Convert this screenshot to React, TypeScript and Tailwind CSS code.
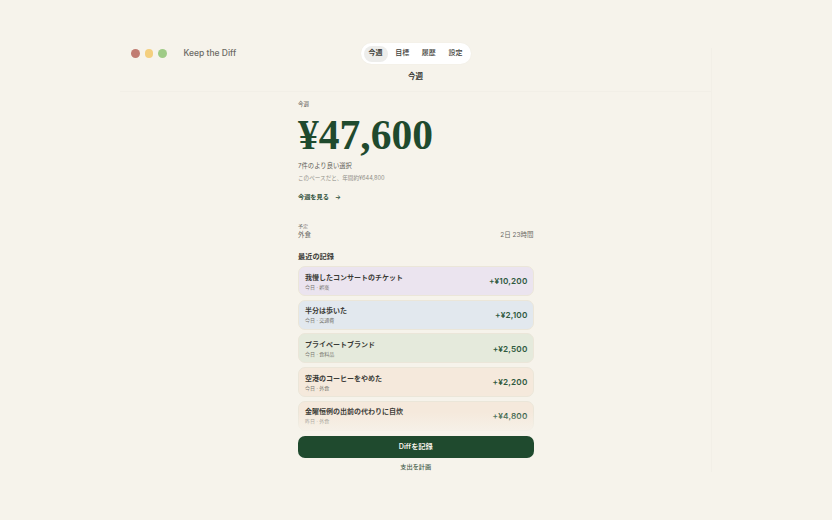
import React from 'react';

interface Entry {
  title: string;
  meta: string;
  amount: string;
  tone: string;
}

const entries: Entry[] = [
  { title: '我慢したコンサートのチケット', meta: '今日 · 娯楽', amount: '+¥10,200', tone: 'bg-[#ebe4ef]' },
  { title: '半分は歩いた', meta: '今日 · 交通費', amount: '+¥2,100', tone: 'bg-[#e2e8ee]' },
  { title: 'プライベートブランド', meta: '今日 · 食料品', amount: '+¥2,500', tone: 'bg-[#e5eadc]' },
  { title: '空港のコーヒーをやめた', meta: '今日 · 外食', amount: '+¥2,200', tone: 'bg-[#f5e9dc]' },
  { title: '金曜恒例の出前の代わりに自炊', meta: '昨日 · 外食', amount: '+¥4,800', tone: 'bg-[#f5e9dc]' },
];

const tabs = ['今週', '目標', '履歴', '設定'];

const sans = "font-['Inter','Noto_Sans_CJK_JP',sans-serif]";

const EntryCard: React.FC<{ entry: Entry }> = ({ entry }) => {
  return (
    <div className={`${entry.tone} h-[30px] shrink-0 rounded-[7px] border border-[#ebe6d9] pl-[6px] pr-[5px] flex items-center justify-between`}>
      <div className="flex flex-col">
        <span className="text-[7px] leading-[11px] font-semibold text-[#3a3a36]">{entry.title}</span>
        <span className="text-[5px] leading-[8px] text-[#77766f]">{entry.meta}</span>
      </div>
      <span className="pt-[1px] text-[8.2px] tracking-[0.02em] font-semibold text-[#2f5a3e]">{entry.amount}</span>
    </div>
  );
};

const App: React.FC = () => {
  return (
    <div className={`${sans} h-[520px] w-[832px] overflow-hidden bg-[#f6f3eb] pt-[48px] pl-[120px]`}>
      <div className="relative h-[424px] w-[592px] border-r border-[#f2efe7]">
        <header className="h-[44px] border-b border-[#f2efe7] flex flex-col">
          <div className="relative flex justify-center h-[16px]">
            <div className="absolute left-[11px] -top-[1px] flex items-center gap-[5px]">
              <span className="h-[8.5px] w-[8.5px] rounded-full bg-[#c17c72]" />
              <span className="h-[8.5px] w-[8.5px] rounded-full bg-[#f4cf7e]" />
              <span className="h-[8.5px] w-[8.5px] rounded-full bg-[#9fcb86]" />
              <span className="ml-[12px] text-[8.5px] font-medium text-[#6b6a64]">Keep the Diff</span>
            </div>
            <nav className="-mt-[5px] h-[21px] w-[110px] rounded-full bg-white flex items-center justify-between px-[3px] shadow-[0_0_2px_rgba(0,0,0,0.04)]">
              {tabs.map((tab, i) => (
                <span
                  key={tab}
                  className={`h-[16px] w-[24px] rounded-full flex items-center justify-center text-[7px] font-medium text-[#3f3f3b] ${i === 0 ? 'bg-[#ededeb] font-semibold' : ''}`}
                >
                  {tab}
                </span>
              ))}
            </nav>
          </div>
          <div className="text-center text-[7.5px] font-semibold text-[#33332f] mt-[7px] leading-[12px]">今週</div>
        </header>

        <main className="w-[235.5px] ml-[178px] mt-[8px]">
          <div className="text-[5.5px] leading-[8px] text-[#55554f]">今週</div>
          <div className="font-['Liberation_Serif',serif] font-bold text-[41.5px] leading-[50px] mt-[1.5px] text-[#1f4a2e]">¥47,600</div>
          <div className="text-[6.3px] leading-[10px] mt-[1.5px] text-[#5f5e58]">7件のより良い選択</div>
          <div className="text-[5.6px] leading-[8px] mt-[3px] text-[#908f88]">このペースだと、年間約¥644,800</div>
          <div className="flex items-center gap-[6px] text-[6.2px] font-semibold leading-[10px] mt-[10px] text-[#2d4f39]">
            <span>今週を見る</span>
            <span>→</span>
          </div>

          <div className="text-[5px] leading-[7px] mt-[21px] text-[#77766f]">予定</div>
          <div className="flex justify-between text-[6.5px] leading-[9px] mt-[1px] text-[#6a6963]">
            <span>外食</span>
            <span>2日 23時間</span>
          </div>

          <div className="text-[7.2px] font-semibold leading-[11px] mt-[11px] text-[#3a3a36]">最近の記録</div>

          <div className="relative mt-[4px] h-[170px] overflow-hidden flex flex-col gap-[3.7px]">
            {entries.map((entry) => (
              <EntryCard key={entry.title} entry={entry} />
            ))}
            <div className="absolute left-0 right-0 bottom-0 h-[24px] bg-gradient-to-b from-transparent to-[#f6f3eb]" />
          </div>

          <button className="block w-full h-[22px] rounded-[7px] bg-[#1f4a2e] text-[7.2px] font-semibold text-[#f5f2eb]">Diffを記録</button>
          <div className="text-center text-[6.2px] font-medium leading-[10px] mt-[4px] text-[#3f5a48]">支出を計画</div>
        </main>
      </div>
    </div>
  );
};

export default App;
